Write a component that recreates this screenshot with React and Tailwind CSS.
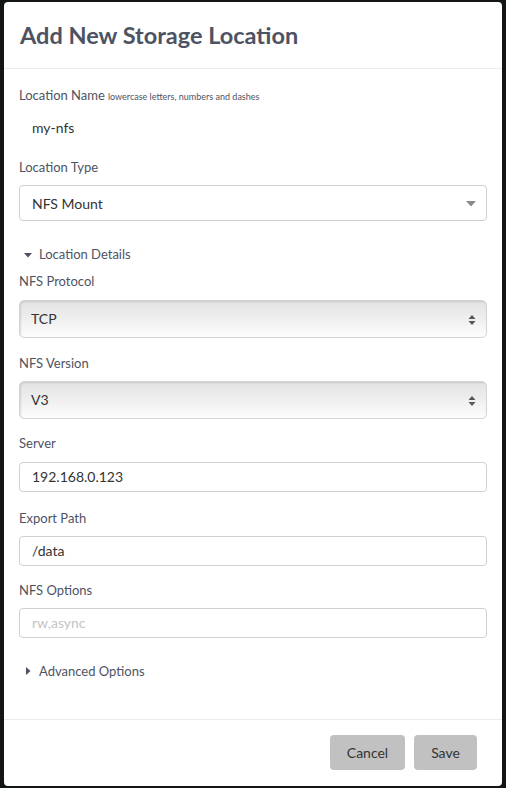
import React from 'react'

const font = { fontFamily: 'Lato, "Open Sans", sans-serif' }

const Label = ({ children }) => (
  <div className="text-[13px] leading-[18px] text-[#4e5363]">{children}</div>
)

const TextInput = ({ value, placeholder }) => (
  <div className="h-[30px] w-full rounded-[4px] border border-[#d0d0d4] bg-white px-3 flex items-center text-[14px]">
    {value ? (
      <span className="text-[#333]">{value}</span>
    ) : (
      <span className="text-[#c4c4c8]">{placeholder}</span>
    )}
  </div>
)

// native looking select with the up/down stepper arrows
const NativeSelect = ({ value }) => (
  <div className="relative h-[38px] w-full rounded-[5px] border border-[#d4d4d4] bg-gradient-to-b from-[#e3e3e3] via-[#efefef] to-[#fdfdfd] shadow-[inset_1px_1px_2px_rgba(0,0,0,0.12)] flex items-center pl-[11px] text-[14px] text-[#333]">
    {value}
    <svg className="absolute right-[10px] top-[13px]" width="8" height="12" viewBox="0 0 8 12">
      <path d="M4 1 L7.5 5 L0.5 5 Z" fill="#555" />
      <path d="M4 11 L7.5 7 L0.5 7 Z" fill="#555" />
    </svg>
  </div>
)

const Section = ({ title, open }) => (
  <div className="flex items-center gap-[6px] text-[13px] text-[#4e5363]">
    <svg width="10" height="10" viewBox="0 0 10 10" className="ml-[4px]">
      {open ? <path d="M1 3 L9 3 L5 7.5 Z" fill="#4e5363" /> : <path d="M3 1 L7.5 5 L3 9 Z" fill="#4e5363" />}
    </svg>
    <span>{title}</span>
  </div>
)

export default function App() {
  return (
    <div style={font} className="w-[506px] h-[788px] bg-[#121515] pt-[2px] pl-[4px]">
      <div className="w-[498px] h-[784px] bg-white rounded-[4px] flex flex-col">
        {/* Header */}
        <div className="h-[67px] border-b border-[#ececec] flex items-center px-[16px]">
          <h2 className="text-[23.5px] font-bold text-[#4e5363] pt-[2px]">Add New Storage Location</h2>
        </div>

        {/* Body */}
        <div className="flex-1 px-[15px] pt-[17px]">
          <div className="flex items-baseline gap-[3px]">
            <Label>Location Name</Label>
            <span className="text-[9px] text-[#4e5363]">lowercase letters, numbers and dashes</span>
          </div>
          <div className="h-[32px] mt-[7px] pl-[13px] flex items-center text-[14px] text-[#333]">my-nfs</div>

          <div className="mt-[15px]">
            <Label>Location Type</Label>
          </div>
          <div className="relative mt-[9px] h-[36px] w-full rounded-[4px] border border-[#d0d0d4] bg-white flex items-center pl-[12px] text-[14px] text-[#333]">
            NFS Mount
            <svg className="absolute right-[10px] top-[15px]" width="10" height="6" viewBox="0 0 10 6">
              <path d="M0 0 L10 0 L5 5.5 Z" fill="#8a8a8a" />
            </svg>
          </div>

          <div className="mt-[24px]">
            <Section title="Location Details" open />
          </div>

          <div className="mt-[7px]">
            <Label>NFS Protocol</Label>
          </div>
          <div className="mt-[10px]">
            <NativeSelect value="TCP" />
          </div>

          <div className="mt-[16px]">
            <Label>NFS Version</Label>
          </div>
          <div className="mt-[9px]">
            <NativeSelect value="V3" />
          </div>

          <div className="mt-[15px]">
            <Label>Server</Label>
          </div>
          <div className="mt-[10px]">
            <TextInput value="192.168.0.123" />
          </div>

          <div className="mt-[17px]">
            <Label>Export Path</Label>
          </div>
          <div className="mt-[9px]">
            <TextInput value="/data" />
          </div>

          <div className="mt-[15px]">
            <Label>NFS Options</Label>
          </div>
          <div className="mt-[9px]">
            <TextInput placeholder="rw,async" />
          </div>

          <div className="mt-[24px]">
            <Section title="Advanced Options" />
          </div>
        </div>

        {/* Footer */}
        <div className="h-[67px] border-t border-[#ececec] flex items-start justify-end gap-[9px] pr-[25px] pt-[15px]">
          <button className="h-[35px] w-[75px] rounded-[4px] bg-[#c1c1c1] text-[14px] text-[#333]">Cancel</button>
          <button className="h-[35px] w-[63px] rounded-[4px] bg-[#c1c1c1] text-[14px] text-[#333]">Save</button>
        </div>
      </div>
    </div>
  )
}
